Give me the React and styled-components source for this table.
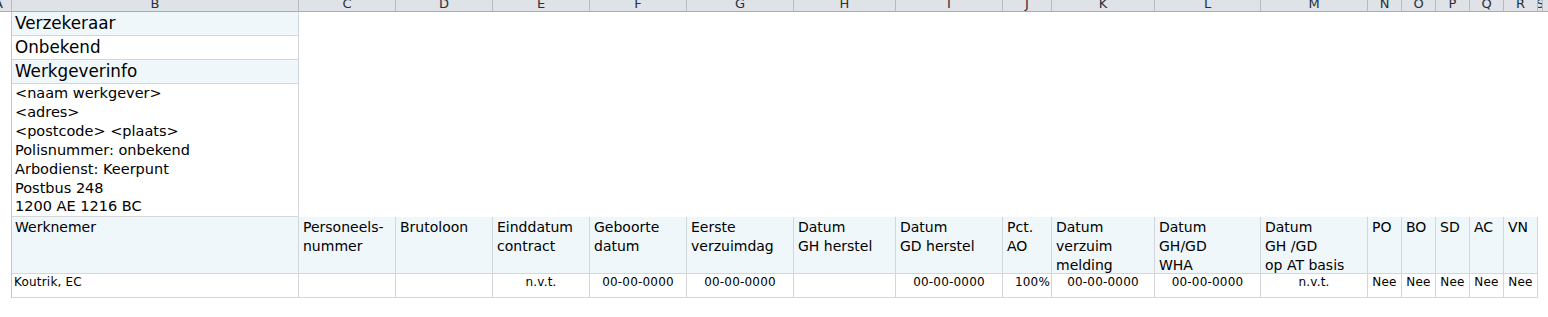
import styled, { createGlobalStyle } from "styled-components";

const GlobalStyle = createGlobalStyle`
  html, body {
    margin: 0;
    background: #ffffff;
  }
  body {
    font-family: "DejaVu Sans", Verdana, sans-serif;
    color: #000000;
  }
`;

// column letters and pixel widths (right gridline included)
const COLUMNS = [
  ["A", 12], ["B", 287], ["C", 97], ["D", 97], ["E", 97], ["F", 97],
  ["G", 107], ["H", 102], ["I", 107], ["J", 49], ["K", 103], ["L", 106],
  ["M", 107], ["N", 34], ["O", 34], ["P", 34], ["Q", 34], ["R", 34], ["S", 5],
];

const GRID = "#d3d6da";
const FILL = "#eff7fb";

const Sheet = styled.div`
  display: grid;
  grid-template-columns: ${COLUMNS.map(([, w]) => `${w}px`).join(" ")} 1fr;
  grid-template-rows: 12px 24px 24px 24px 133px 57px 24px 1fr;
  width: 1548px;
  height: 317px;
  overflow: hidden;
`;

const ColLabel = styled.div`
  box-sizing: border-box;
  display: flex;
  align-items: flex-end;
  justify-content: ${(p) => (p.$edge ? "flex-end" : "center")};
  padding-right: ${(p) => (p.$edge ? "8px" : "0")};
  padding-bottom: 1px;
  overflow: hidden;
  background: #dfe2e6;
  border-right: 1px solid #b8bbbf;
  border-bottom: 1px solid #a9acb0;
  color: #25303e;
  font-size: 13px;
  line-height: 13px;
  white-space: nowrap;
`;

const LabelFill = styled.div`
  background: #dfe2e6;
  border-bottom: 1px solid #a9acb0;
`;

const Gutter = styled.div`
  border-right: 1px solid #c4c7cb;
`;

const Empty = styled.div`
  grid-column: ${(p) => p.$from} / -1;
`;

const Cell = styled.div`
  box-sizing: border-box;
  overflow: hidden;
  background: ${(p) => (p.$fill ? FILL : "#ffffff")};
  border-right: 1px solid ${GRID};
  border-bottom: 1px solid ${GRID};
  white-space: pre-line;
`;

const InfoCell = styled(Cell)`
  padding: 0 3px;
  font-size: ${(p) => p.$size || 16.8}px;
  line-height: ${(p) => p.$lead || 23}px;
`;

const HeadCell = styled(Cell)`
  padding: 1px 4px 0 ${(p) => (p.$first ? 3 : 4)}px;
  font-size: 14px;
  line-height: 19px;
  background: ${FILL};
`;

const DataCell = styled(Cell)`
  padding: 1px ${(p) => (p.$align === "right" ? 1 : 2)}px 0 2px;
  font-size: 12px;
  letter-spacing: 0.2px;
  line-height: 15px;
  text-align: ${(p) => p.$align || "left"};
  white-space: nowrap;
`;

const headers = [
  "Werknemer",
  "Personeels-\nnummer",
  "Brutoloon",
  "Einddatum\ncontract",
  "Geboorte\ndatum",
  "Eerste\nverzuimdag",
  "Datum\nGH herstel",
  "Datum\nGD herstel",
  "Pct.\nAO",
  "Datum\nverzuim\nmelding",
  "Datum\nGH/GD\nWHA",
  "Datum\nGH /GD\nop AT basis",
  "PO",
  "BO",
  "SD",
  "AC",
  "VN",
];

const row = [
  ["Koutrik, EC", "left"],
  ["", "left"],
  ["", "left"],
  ["n.v.t.", "center"],
  ["00-00-0000", "center"],
  ["00-00-0000", "center"],
  ["", "left"],
  ["00-00-0000", "center"],
  ["100%", "right"],
  ["00-00-0000", "center"],
  ["00-00-0000", "center"],
  ["n.v.t.", "center"],
  ["Nee", "center"],
  ["Nee", "center"],
  ["Nee", "center"],
  ["Nee", "center"],
  ["Nee", "center"],
];

const werkgever = [
  "<naam werkgever>",
  "<adres>",
  "<postcode> <plaats>",
  "Polisnummer: onbekend",
  "Arbodienst: Keerpunt",
  "Postbus 248",
  "1200 AE 1216 BC",
].join("\n");

const App = () => {
  return (
    <>
      <GlobalStyle />
      <Sheet>
        {COLUMNS.map(([letter], i) => (
          <ColLabel key={letter} $edge={i === 0}>
            {letter}
          </ColLabel>
        ))}
        <LabelFill />

        <Gutter />
        <InfoCell $fill>Verzekeraar</InfoCell>
        <Empty $from={3} />

        <Gutter />
        <InfoCell>Onbekend</InfoCell>
        <Empty $from={3} />

        <Gutter />
        <InfoCell $fill>Werkgeverinfo</InfoCell>
        <Empty $from={3} />

        <Gutter />
        <InfoCell $size={14.5} $lead={18.9}>
          {werkgever}
        </InfoCell>
        <Empty $from={3} />

        <Gutter />
        {headers.map((h, i) => (
          <HeadCell key={i} $first={i === 0}>
            {h}
          </HeadCell>
        ))}
        <Empty $from={19} />

        <Gutter />
        {row.map(([value, align], i) => (
          <DataCell key={i} $align={align}>
            {value}
          </DataCell>
        ))}
        <Empty $from={19} />

        <Empty $from={1} />
      </Sheet>
    </>
  );
};

export default App;
